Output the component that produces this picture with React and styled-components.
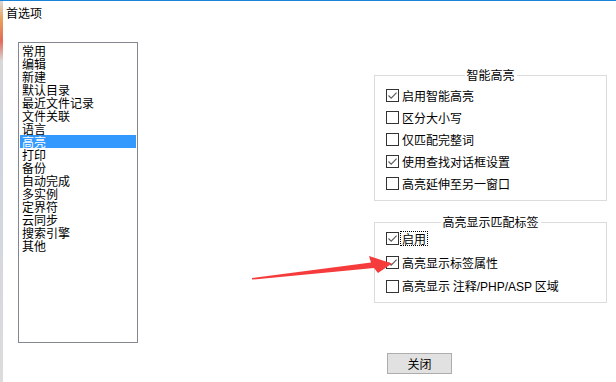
import React from "react";
import styled, { createGlobalStyle } from "styled-components";

const GlobalStyle = createGlobalStyle`
  html, body {
    margin: 0;
    padding: 0;
    background: #ffffff;
  }
  body {
    font-family: "Noto Sans CJK SC", "Noto Sans", sans-serif;
    color: #000;
  }
`;

const items = [
  "常用",
  "编辑",
  "新建",
  "默认目录",
  "最近文件记录",
  "文件关联",
  "语言",
  "高亮",
  "打印",
  "备份",
  "自动完成",
  "多实例",
  "定界符",
  "云同步",
  "搜索引擎",
  "其他",
];

const smartOptions = [
  { label: "启用智能高亮", checked: true },
  { label: "区分大小写", checked: false },
  { label: "仅匹配完整词", checked: false },
  { label: "使用查找对话框设置", checked: true },
  { label: "高亮延伸至另一窗口", checked: false },
];

function CheckBox({ checked }) {
  return (
    <Box>
      {checked && (
        <svg width="11" height="11" viewBox="0 0 11 11">
          <path d="M1.5 5.5 L4.2 8.2 L9.6 2.6" fill="none" stroke="#5a5a5a" strokeWidth="1.1" />
        </svg>
      )}
    </Box>
  );
}

function App() {
  return (
    <>
      <GlobalStyle />
      <Window>
        <EdgeStrip />
        <Main>
          <TitleBar>首选项</TitleBar>
          <Body>
            <ListBox>
              {items.map((it) => (
                <ListItem key={it} $selected={it === "高亮"}>
                  {it}
                </ListItem>
              ))}
            </ListBox>
            <RightColumn>
              <GroupBox $height={126} $pad={8} $rowH={22}>
                <GroupTitle>智能高亮</GroupTitle>
                {smartOptions.map((o) => (
                  <Row key={o.label}>
                    <CheckBox checked={o.checked} />
                    <Label>{o.label}</Label>
                  </Row>
                ))}
              </GroupBox>
              <GroupBox $height={81} $pad={3} $rowH={24}>
                <GroupTitle>高亮显示匹配标签</GroupTitle>
                <Row>
                  <CheckBox checked />
                  <Label $focused>启用</Label>
                </Row>
                <Row>
                  <CheckBox checked />
                  <Label>高亮显示标签属性</Label>
                </Row>
                <Row>
                  <CheckBox />
                  <Label>
                    高亮显示 注释<Latin>/PHP/ASP</Latin> 区域
                  </Label>
                </Row>
              </GroupBox>
              <CloseButton>关闭</CloseButton>
            </RightColumn>
          </Body>
        </Main>
        <Arrow width="616" height="382" viewBox="0 0 616 382">
          <polygon
            points="252,278 371,262.5 369,256 392,263.5 378,273 374,268 252,279.6"
            fill="#f53b3b"
          />
        </Arrow>
      </Window>
    </>
  );
}

const Window = styled.div`
  position: relative;
  display: flex;
  width: 616px;
  height: 382px;
  box-sizing: border-box;
  border-top: 1px solid #1a84d8;
  background: #fff;
  overflow: hidden;
`;

const EdgeStrip = styled.div`
  width: 3px;
  flex-shrink: 0;
  background: linear-gradient(
    to bottom,
    #d9d9d9 0px,
    #e8a05a 18px,
    #e26a5a 40px,
    #d8d8d8 60px,
    #d0d4e0 150px,
    #dcdcdc 382px
  );
`;

const Main = styled.div`
  flex: 1;
  display: flex;
  flex-direction: column;
`;

const TitleBar = styled.div`
  height: 26px;
  padding: 4px 0 0 3px;
  box-sizing: border-box;
  font-size: 12px;
  line-height: 16px;
`;

const Body = styled.div`
  display: flex;
  padding: 15px 0 0 15px;
`;

const ListBox = styled.div`
  width: 120px;
  height: 301px;
  box-sizing: border-box;
  border: 1px solid #828790;
  padding: 1px 1px 0 1px;
  flex-shrink: 0;
`;

const ListItem = styled.div`
  height: 13px;
  line-height: 13px;
  font-size: 12px;
  padding-left: 2px;
  white-space: nowrap;
  background: ${(p) => (p.$selected ? "#3399ff" : "transparent")};
  color: ${(p) => (p.$selected ? "#fff" : "#000")};
`;

const RightColumn = styled.div`
  display: flex;
  flex-direction: column;
  margin-left: 236px;
  padding-top: 33px;
  width: 233px;
`;

const GroupBox = styled.div`
  position: relative;
  height: ${(p) => p.$height}px;
  box-sizing: border-box;
  border: 1px solid #dcdcdc;
  padding: ${(p) => p.$pad}px 0 0 11px;
  margin-bottom: 21px;
  & > div {
    height: ${(p) => p.$rowH}px;
  }
`;

const GroupTitle = styled.span`
  position: absolute;
  top: -9px;
  left: 50%;
  transform: translateX(-50%);
  background: #fff;
  padding: 0 2px;
  font-size: 12px;
  line-height: 16px;
  white-space: nowrap;
`;

const Row = styled.div`
  display: flex;
  align-items: center;
`;

const Box = styled.span`
  width: 13px;
  height: 13px;
  box-sizing: border-box;
  border: 1px solid #333333;
  background: #fff;
  display: flex;
  align-items: center;
  justify-content: center;
  flex-shrink: 0;
`;

const Label = styled.span`
  margin-left: 2px;
  padding: 0 1px;
  font-size: 12px;
  line-height: 13px;
  white-space: nowrap;
  outline: ${(p) => (p.$focused ? "1px dotted #000" : "none")};
`;

const Latin = styled.span`
  font-family: "Liberation Sans", Arial, sans-serif;
  font-size: 12px;
`;

const CloseButton = styled.button`
  align-self: flex-start;
  margin: 29px 0 0 13px;
  width: 65px;
  height: 21px;
  box-sizing: border-box;
  border: 1px solid #adadad;
  background: #e1e1e1;
  font-family: "Noto Sans CJK SC", sans-serif;
  font-size: 12px;
  line-height: 17px;
  padding: 0;
  color: #000;
`;

const Arrow = styled.svg`
  position: absolute;
  top: -1px;
  left: 0;
  pointer-events: none;
`;

export default App;
